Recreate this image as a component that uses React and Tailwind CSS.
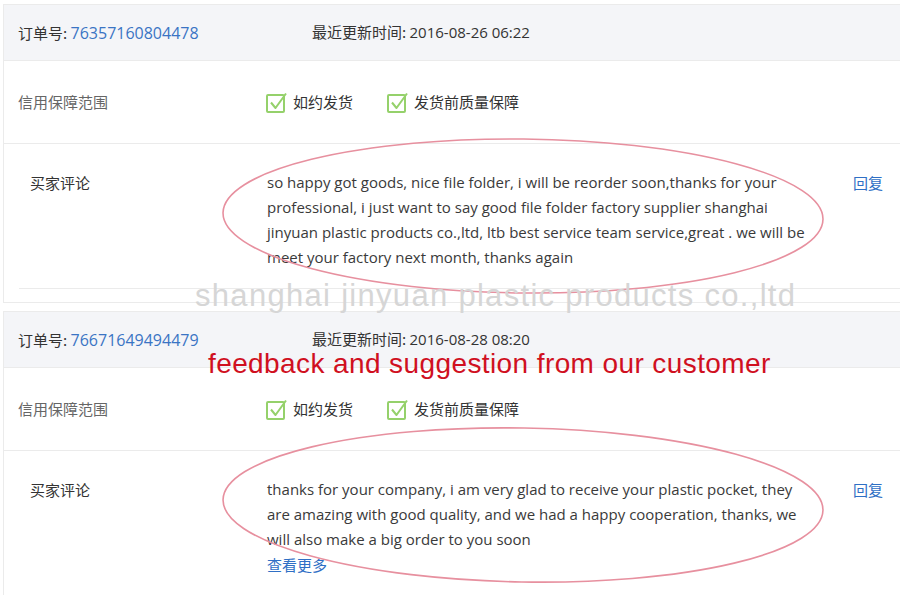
import React from "react";

const cjk = "font-['Noto_Sans_CJK_SC','Noto_Sans',sans-serif]";
const latin = "font-['Open_Sans','Noto_Sans_CJK_SC',sans-serif]";
const arial = "font-['Liberation_Sans',Arial,sans-serif]";

function Check() {
  return (
    <svg width="22" height="22" viewBox="0 0 22 22" className="shrink-0">
      <rect x="1" y="4" width="17" height="17" rx="1" fill="none" stroke="#95d16b" strokeWidth="2" />
      <path d="M5 11.5 L9.5 17 L20 2.5" fill="none" stroke="#95d16b" strokeWidth="2" strokeLinejoin="round" />
    </svg>
  );
}

function Guarantee() {
  return (
    <div className={`flex items-center h-[83px] border-b border-[#ebebeb] pl-[14px] text-[15px] ${cjk}`}>
      <div className="w-[248px] text-[#666]">信用保障范围</div>
      <div className="flex items-center gap-[5px] w-[121px] text-[#333]">
        <Check />
        如约发货
      </div>
      <div className="flex items-center gap-[5px] text-[#333]">
        <Check />
        发货前质量保障
      </div>
    </div>
  );
}

function Header({ order, time }) {
  return (
    <div className={`flex items-center h-[56px] bg-[#f4f5f8] border-b border-[#ebebeb] pl-[14px] text-[15px] text-[#333] ${cjk}`}>
      <div className="w-[294px]">
        订单号: <span className={`text-[#3a74c4] text-[16px] ${latin}`}>{order}</span>
      </div>
      <div>
        最近更新时间: <span className={latin}>{time}</span>
      </div>
    </div>
  );
}

function Comment({ lines, more, height }) {
  return (
    <div className={`flex ${height} pt-[26px] pl-[26px] leading-[25px]`}>
      <div className={`w-[237px] text-[15px] text-[#333] ${cjk}`}>买家评论</div>
      <div className={`w-[586px] text-[15px] text-[#3a3a3a] ${latin}`}>
        {lines.map(l => (
          <div key={l} className="whitespace-nowrap">{l}</div>
        ))}
        {more && <div className={`text-[#2f6fc5] ${cjk}`}>查看更多</div>}
      </div>
      <div className={`text-[15px] text-[#2f6fc5] ${cjk}`}>回复</div>
    </div>
  );
}

export default function App() {
  return (
    <div className="relative w-[900px] h-[595px] overflow-hidden bg-white pt-[4px] pl-[3px]">
      <div className="border-l border-t border-b border-[#ebebeb]">
        <Header order="76357160804478" time="2016-08-26 06:22" />
        <Guarantee />
        <Comment
          height="h-[144px]"
          lines={[
            "so happy got goods, nice file folder, i will be reorder soon,thanks for your",
            "professional, i just want to say good file folder factory supplier shanghai",
            "jinyuan plastic products co.,ltd, ltb best service team service,great . we will be",
            "meet your factory next month, thanks again",
          ]}
        />
        <div className="ml-[15px] border-t border-[#ebebeb] h-[14px]" />
      </div>

      <div className="mt-[8px] border-l border-t border-[#ebebeb]">
        <Header order="76671649494479" time="2016-08-28 08:20" />
        <Guarantee />
        <Comment
          height="h-[160px]"
          more
          lines={[
            "thanks for your company, i am very glad to receive your plastic pocket, they",
            "are amazing with good quality, and we had a happy cooperation, thanks, we",
            "will also make a big order to you soon",
          ]}
        />
      </div>

      {/* hand-drawn highlight rings */}
      <svg className="absolute inset-0 pointer-events-none" width="900" height="595">
        <ellipse cx="523" cy="216" rx="300" ry="77" fill="none" stroke="#e7909f" strokeWidth="1.6" transform="rotate(0.6 523 216)" />
        <ellipse cx="523" cy="505" rx="300" ry="77" fill="none" stroke="#e7909f" strokeWidth="1.6" transform="rotate(1 523 505)" />
      </svg>

      <div className={`absolute left-[195px] top-[277px] text-[31px] tracking-[1.3px] leading-[38px] text-[#d6d6d6] whitespace-nowrap ${arial}`}>
        shanghai jinyuan plastic products co.,ltd
      </div>
      <div className={`absolute left-[208px] top-[346px] text-[28px] tracking-[0.4px] leading-[36px] text-[#d0101f] whitespace-nowrap ${arial}`}>
        feedback and suggestion from our customer
      </div>
    </div>
  );
}
